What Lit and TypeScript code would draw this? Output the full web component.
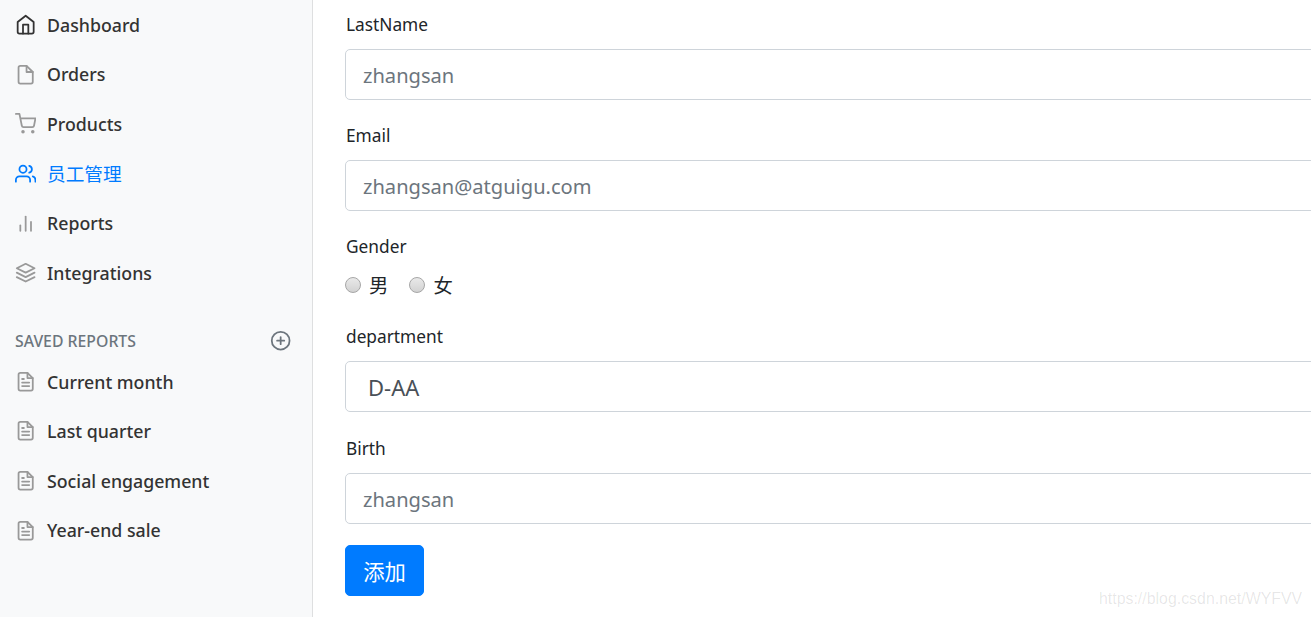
import { LitElement, html, css, svg } from "lit";
import { customElement } from "lit/decorators.js";

const ICONS: Record<string, unknown> = {
  home: svg`<path d="M3 9l9-7 9 7v11a2 2 0 0 1-2 2H5a2 2 0 0 1-2-2z"/><polyline points="9 22 9 12 15 12 15 22"/>`,
  file: svg`<path d="M13 2H6a2 2 0 0 0-2 2v16a2 2 0 0 0 2 2h12a2 2 0 0 0 2-2V9z"/><polyline points="13 2 13 9 20 9"/>`,
  cart: svg`<circle cx="9" cy="21" r="1"/><circle cx="20" cy="21" r="1"/><path d="M1 1h4l2.68 13.39a2 2 0 0 0 2 1.61h9.72a2 2 0 0 0 2-1.61L23 6H6"/>`,
  users: svg`<path d="M17 21v-2a4 4 0 0 0-4-4H5a4 4 0 0 0-4 4v2"/><circle cx="9" cy="7" r="4"/><path d="M23 21v-2a4 4 0 0 0-3-3.87"/><path d="M16 3.13a4 4 0 0 1 0 7.75"/>`,
  bars: svg`<line x1="18" y1="20" x2="18" y2="10"/><line x1="12" y1="20" x2="12" y2="4"/><line x1="6" y1="20" x2="6" y2="14"/>`,
  layers: svg`<polygon points="12 2 2 7 12 12 22 7 12 2"/><polyline points="2 17 12 22 22 17"/><polyline points="2 12 12 17 22 12"/>`,
  plus: svg`<circle cx="12" cy="12" r="10"/><line x1="12" y1="8" x2="12" y2="16"/><line x1="8" y1="12" x2="16" y2="12"/>`,
  doc: svg`<path d="M14 2H6a2 2 0 0 0-2 2v16a2 2 0 0 0 2 2h12a2 2 0 0 0 2-2V8z"/><polyline points="14 2 14 8 20 8"/><line x1="16" y1="13" x2="8" y2="13"/><line x1="16" y1="17" x2="8" y2="17"/><polyline points="10 9 9 9 8 9"/>`,
};

const icon = (name: string) => html`<svg class="icon" viewBox="0 0 24 24" fill="none" stroke="currentColor" stroke-width="2" stroke-linecap="round" stroke-linejoin="round">${ICONS[name]}</svg>`;

const MAIN_NAV = [
  { icon: "home", label: "Dashboard", cls: "dark" },
  { icon: "file", label: "Orders", cls: "" },
  { icon: "cart", label: "Products", cls: "" },
  { icon: "users", label: "员工管理", cls: "active" },
  { icon: "bars", label: "Reports", cls: "" },
  { icon: "layers", label: "Integrations", cls: "" },
];
const SAVED = ["Current month", "Last quarter", "Social engagement", "Year-end sale"];

@customElement("app-root")
export class AppRoot extends LitElement {
  static styles = css`
    :host {
      display: flex;
      width: 1311px;
      height: 617px;
      overflow: hidden;
      position: relative;
      background: #fff;
      font-family: "Noto Sans", "Noto Sans CJK SC", sans-serif;
      color: #212529;
    }
    .sidebar {
      width: 313px;
      flex: none;
      box-sizing: border-box;
      background: #f8f9fa;
      box-shadow: inset -1px 0 0 rgba(0, 0, 0, 0.1);
    }
    .nav { display: flex; flex-direction: column; }
    .link {
      display: flex;
      align-items: center;
      height: 49.6px;
      padding-left: 15px;
      font-size: 17.75px;
      font-weight: 500;
      color: #333;
    }
    .link .icon { width: 21.33px; height: 21.33px; margin-right: 10.7px; color: #999; flex: none; }
    .link.dark .icon { color: #333; }
    .link.active, .link.active .icon { color: #007bff; }
    .link.active .text { font-weight: 400; font-size: 18.67px; position: relative; top: -1px; }
    .heading {
      display: flex;
      justify-content: space-between;
      align-items: center;
      margin-top: 29px;
      height: 30.2px;
      padding: 0 22px 2px 15px;
      box-sizing: border-box;
      font-size: 15.8px;
      font-weight: 500;
      text-transform: uppercase;
      color: #6c757d;
    }
    .heading .icon { width: 21.33px; height: 21.33px; }
    .main {
      flex: 1;
      min-width: 0;
      overflow: hidden;
      padding: 10.3px 0 0 32px;
    }
    form { width: 1200px; }
    .group { margin-bottom: 21.33px; }
    .group.select-group { padding-bottom: 0.8px; }
    label.title {
      display: block;
      padding: 1px 0 0 1px;
      font-size: 17.3px;
      line-height: 28px;
      margin-bottom: 9.67px;
    }
    .control {
      display: block;
      box-sizing: border-box;
      width: 100%;
      height: 51px;
      padding: 2px 17px 0;
      font: inherit;
      font-size: 20.1px;
      color: #495057;
      background: #fff;
      border: 1px solid #ced4da;
      border-radius: 5px;
      outline: none;
    }
    .control::placeholder { color: #6c757d; opacity: 1; }
    select.control { padding: 1px 0 0 22px; font-size: 22px; appearance: none; }
    .radios {
      display: flex;
      align-items: center;
      box-sizing: border-box;
      height: 30px;
      padding-bottom: 3px;
      font-size: 19.4px;
    }
    .radio { display: flex; align-items: center; margin-right: 20px; }
    .radio input {
      appearance: none;
      margin: 2px 8px 0 0;
      width: 16px;
      height: 16px;
      border-radius: 50%;
      border: 1px solid #a6a6a6;
      background: linear-gradient(#e9e9e9, #d2d2d2);
    }
    .radio + .radio input { margin-left: 1px; }
    .submit {
      display: block;
      box-sizing: border-box;
      width: 79px;
      height: 51px;
      padding: 0;
      border: 1px solid #007bff;
      border-radius: 5px;
      background: #007bff;
      color: #fff;
      font: inherit;
      font-size: 21.33px;
    }
    .watermark {
      position: absolute;
      left: 1099px;
      top: 589px;
      font-family: "Liberation Sans", sans-serif;
      font-size: 15.9px;
      line-height: 20px;
      color: rgba(0, 0, 0, 0.1);
      white-space: nowrap;
    }
  `;

  render() {
    const link = (i: string, label: string, cls = "") =>
      html`<div class="link ${cls}">${icon(i)}<span class="text">${label}</span></div>`;
    return html`
      <nav class="sidebar">
        <div class="nav">${MAIN_NAV.map((n) => link(n.icon, n.label, n.cls))}</div>
        <div class="heading"><span>Saved reports</span>${icon("plus")}</div>
        <div class="nav">${SAVED.map((s) => link("doc", s))}</div>
      </nav>
      <main class="main">
        <form>
          <div class="group">
            <label class="title">LastName</label>
            <input class="control" placeholder="zhangsan" />
          </div>
          <div class="group">
            <label class="title">Email</label>
            <input class="control" placeholder="zhangsan@atguigu.com" />
          </div>
          <div class="group">
            <label class="title">Gender</label>
            <div class="radios">
              <label class="radio"><input type="radio" name="g" />男</label>
              <label class="radio"><input type="radio" name="g" />女</label>
            </div>
          </div>
          <div class="group select-group">
            <label class="title">department</label>
            <select class="control"><option>D-AA</option></select>
          </div>
          <div class="group">
            <label class="title">Birth</label>
            <input class="control" placeholder="zhangsan" />
          </div>
          <button class="submit" type="button">添加</button>
        </form>
      </main>
      <div class="watermark">https://blog.csdn.net/WYFVV</div>
    `;
  }
}
